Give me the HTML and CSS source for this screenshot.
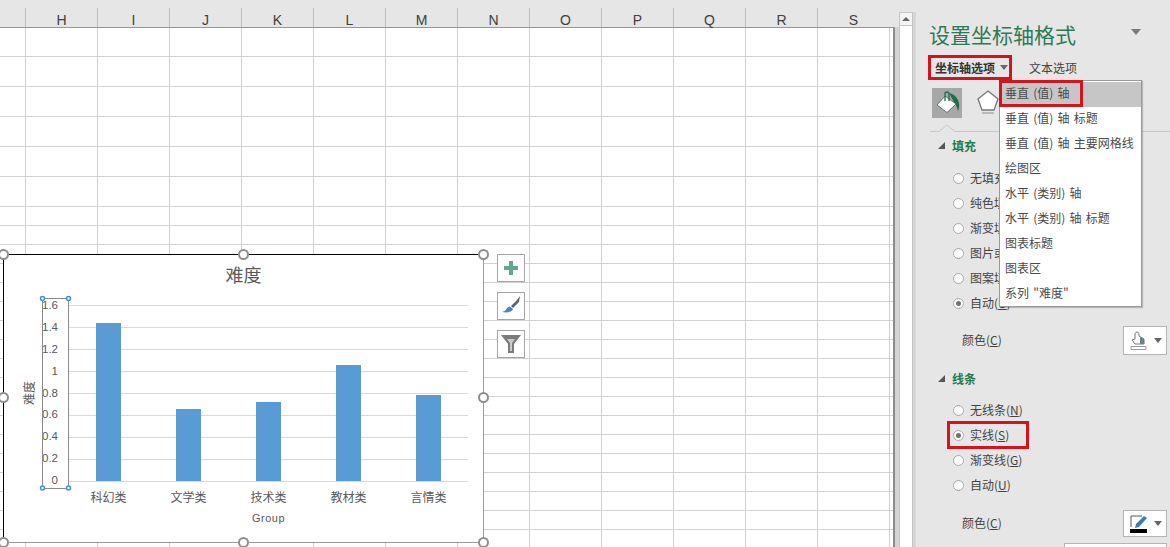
FILE: index.html
```html
<!DOCTYPE html>
<html lang="zh">
<head>
<meta charset="utf-8">
<title>设置坐标轴格式</title>
<link rel="stylesheet" href="styles.css">
</head>
<body>
<div class="app">
  <section class="sheet">
    <div class="col-header">
      <span class="corner"></span>
      <span class="col">H</span><span class="col">I</span><span class="col">J</span><span class="col">K</span><span class="col">L</span><span class="col">M</span><span class="col">N</span><span class="col">O</span><span class="col">P</span><span class="col">Q</span><span class="col">R</span><span class="col">S</span>
    </div>
    <div class="grid">
      <div class="row tall"></div><div class="row tall"></div><div class="row tall"></div><div class="row tall"></div><div class="row tall"></div><div class="row tall"></div>
      <div class="row"></div><div class="row"></div><div class="row"></div><div class="row"></div><div class="row"></div><div class="row"></div><div class="row"></div><div class="row"></div><div class="row"></div><div class="row"></div><div class="row"></div><div class="row"></div><div class="row"></div><div class="row"></div><div class="row"></div><div class="row"></div><div class="row"></div><div class="row"></div>
    </div>

    <div class="chart">
      <svg class="chart-svg" width="480" height="288" viewBox="4 255 480 288">
        <g class="gridlines">
          <line x1="69" x2="468" y1="305.5" y2="305.5"/><line x1="69" x2="468" y1="327.5" y2="327.5"/><line x1="69" x2="468" y1="349.5" y2="349.5"/><line x1="69" x2="468" y1="371.5" y2="371.5"/><line x1="69" x2="468" y1="393.5" y2="393.5"/><line x1="69" x2="468" y1="415.5" y2="415.5"/><line x1="69" x2="468" y1="437.5" y2="437.5"/><line x1="69" x2="468" y1="459.5" y2="459.5"/><line x1="69" x2="468" y1="481.5" y2="481.5"/>
        </g>
        <g class="bars">
          <rect x="96" y="323" width="25" height="158"/><rect x="176" y="409" width="25" height="72"/><rect x="256" y="402" width="25" height="79"/><rect x="336" y="365" width="25" height="116"/><rect x="416" y="395" width="25" height="86"/>
        </g>
        <text class="c-title" x="243.500" y="282">难度</text>
        <g class="c-ticks">
          <text x="58" y="309">1.6</text><text x="58" y="331">1.4</text><text x="58" y="353">1.2</text><text x="58" y="375">1</text><text x="58" y="397">0.8</text><text x="58" y="418">0.6</text><text x="58" y="440">0.4</text><text x="58" y="462">0.2</text><text x="58" y="484">0</text>
        </g>
        <g class="c-cats">
          <text x="108.500" y="502">科幻类</text><text x="188.500" y="502">文学类</text><text x="268.500" y="502">技术类</text><text x="348.500" y="502">教材类</text><text x="428.500" y="502">言情类</text>
        </g>
        <text class="c-group" x="268.500" y="522">Group</text>
        <text class="c-axis" transform="translate(34 393) rotate(-90)">难度</text>
        <rect class="axis-box" x="42.500" y="298.500" width="26" height="190"/>
        <g class="axis-handles">
          <circle cx="42.500" cy="298.500" r="2"/><circle cx="68.500" cy="298.500" r="2"/><circle cx="42.500" cy="488" r="2"/><circle cx="68.500" cy="488" r="2"/>
        </g>
      </svg>
      <span class="handle h-tl"></span><span class="handle h-tc"></span><span class="handle h-tr"></span>
      <span class="handle h-ml"></span><span class="handle h-mr"></span>
      <span class="handle h-bl"></span><span class="handle h-bc"></span><span class="handle h-br"></span>
    </div>

    <div class="chart-tools">
      <span class="tool"><svg width="16" height="16" viewBox="0 0 16 16"><path fill="#5fa88c" d="M6 1h4v5h5v4h-5v5H6v-5H1V6h5z"/></svg></span>
      <span class="tool"><svg width="22" height="22" viewBox="0 0 22 22"><path fill="#5b6470" d="M20 1l-1 6-6 6-2-2 6-6z"/><path fill="#4f86b5" d="M10 11.500l3 2.500c-1 3-5 4-11 3 3-1 4-2 5-4 1-1 2-1.500 3-1.500z"/></svg></span>
      <span class="tool"><svg width="22" height="22" viewBox="0 0 22 22"><path fill="#7b7b7b" d="M1 2h20l-7 9v9h-6v-9z"/><path fill="#fff" d="M7 6h8l-3 4v8h-2v-8z" opacity=".6"/></svg></span>
    </div>
  </section>

  <div class="gutter"></div>
  <div class="scrollbar"><span class="scroll-up"></span></div>
  <div class="divider"></div>

  <aside class="panel">
    <header class="panel-head">
      <h1 class="panel-title">设置坐标轴格式</h1>
      <span class="caret big"></span>
    </header>
    <div class="tabs">
      <div class="tab active">坐标轴选项<span class="caret tab-caret"></span></div>
      <div class="tab">文本选项</div>
    </div>
    <div class="icon-row">
      <span class="icon-tile">
        <svg width="30" height="30" viewBox="0 0 30 30"><path d="M17 5c5 1 9 5 10 10 .5 3 0 5-1 8-1-3-1-5-3-7z" fill="#1f6b4a"/><path d="M13 8l11 8-9 8.500L5 17z" fill="#fff" stroke="#2d6b50" stroke-width=".8"/><path d="M13 13V6a2 2 0 0 1 4 0v7" fill="none" stroke="#1f6b4a" stroke-width="1.300"/></svg>
      </span>
      <span class="icon-pent">
        <svg width="24" height="28" viewBox="0 0 24 28"><path d="M12 2l10 8-4 11H6L2 10z" fill="#fff" stroke="#777" stroke-width="1.300"/><path d="M6 24h12" stroke="#aaa" stroke-width="1.500"/></svg>
      </span>
    </div>
    <svg class="tab-rule" width="254" height="9" viewBox="0 0 254 9"><path d="M14 7.500H23L31 1l8 6.500H254" fill="none" stroke="#c8c8c8"/></svg>

    <div class="section first"><span class="tri"></span>填充</div>
    <div class="options opt-fill">
      <label class="opt"><span class="radio"></span>无填充(<u>N</u>)</label>
      <label class="opt"><span class="radio"></span>纯色填充(<u>S</u>)</label>
      <label class="opt"><span class="radio"></span>渐变填充(<u>G</u>)</label>
      <label class="opt"><span class="radio"></span>图片或纹理填充(<u>P</u>)</label>
      <label class="opt"><span class="radio"></span>图案填充(<u>A</u>)</label>
      <label class="opt"><span class="radio on"></span>自动(<u>U</u>)</label>
    </div>
    <div class="color-row fill-color">
      <span class="color-label">颜色(<u>C</u>)</span>
      <span class="color-btn">
        <svg width="20" height="20" viewBox="0 0 20 20"><path d="M8 1c2 0 2 2 2 4l5 3v5H6L3 9l3-1V3c0-1 1-2 2-2z" fill="#fff" stroke="#777"/><path d="M11 6l4 2v5h-4z" fill="#6a7f8c"/><path d="M2 15.500h15v3H2z" fill="#fff" stroke="#999"/></svg>
        <span class="caret"></span>
      </span>
    </div>

    <div class="section second"><span class="tri"></span>线条</div>
    <div class="options opt-line">
      <label class="opt"><span class="radio"></span>无线条(<u>N</u>)</label>
      <label class="opt marked"><span class="radio on"></span>实线(<u>S</u>)</label>
      <label class="opt"><span class="radio"></span>渐变线(<u>G</u>)</label>
      <label class="opt"><span class="radio"></span>自动(<u>U</u>)</label>
    </div>
    <div class="color-row line-color">
      <span class="color-label">颜色(<u>C</u>)</span>
      <span class="color-btn">
        <svg width="20" height="20" viewBox="0 0 20 20"><path d="M13 2H2v11" fill="none" stroke="#555"/><path d="M15 2l3 2-8 9-4 1 1-4z" fill="#3d7cb0"/><path d="M1 15h17v4H1z" fill="#000"/></svg>
        <span class="caret"></span>
      </span>
    </div>
    <div class="value-box"></div>

    <ul class="menu">
      <li class="sel">垂直 (值) 轴</li>
      <li>垂直 (值) 轴 标题</li>
      <li>垂直 (值) 轴 主要网格线</li>
      <li>绘图区</li>
      <li>水平 (类别) 轴</li>
      <li>水平 (类别) 轴 标题</li>
      <li>图表标题</li>
      <li>图表区</li>
      <li>系列 "难度"</li>
    </ul>
  </aside>
</div>
</body>
</html>
```
FILE: styles.css
```css
*, *::before, *::after { box-sizing: border-box; }
html, body { margin: 0; height: 100%; overflow: hidden; background: #e6e6e6; }
body { font-family: "Noto Sans CJK SC", "Liberation Sans", sans-serif; font-size: 12px; color: #444; }
.app { display: flex; width: 1170px; height: 547px; }

/* sheet */
.sheet { position: relative; width: 895px; height: 547px; flex: none; overflow: hidden; }
.col-header { display: flex; height: 28px; padding-top: 8px; background: #e6e6e6; border-bottom: 1px solid #969696; }
.corner { width: 25px; flex: none; }
.col { width: 72px; flex: none; border-left: 1px solid #bcbcbc; text-align: center; font: 14px/24px "Liberation Sans", sans-serif; color: #404040; }
.grid {
  position: relative;
  height: 519px;
  background-color: #fff;
  background-image: repeating-linear-gradient(to right, #d0d0d0 0, #d0d0d0 1px, transparent 1px, transparent 72px);
  background-position: 25px 0;
  border-right: 2px solid #8c8c8c;
}
.row { height: 19px; border-bottom: 1px solid #d0d0d0; }
.row.tall { height: 30px; }
.row.tall:first-child { height: 29px; }

/* chart */
.chart {
  position: absolute; left: 4px; top: 255px; width: 480px; height: 288px;
  background: #fff;
  border-right: 1px solid #9a9a9a; border-bottom: 1px solid #9a9a9a;
  box-shadow: -1px 0 0 #000, 0 -1px 0 #000;
}
.chart-svg { display: block; }
.chart-svg text { font-family: "Noto Sans CJK SC", sans-serif; fill: #595959; }
.gridlines line { stroke: #d9d9d9; stroke-width: 1; }
.bars rect { fill: #5b9bd5; }
.c-title { font-size: 18px; text-anchor: middle; }
.chart-svg .c-ticks text { font-family: "Liberation Sans", sans-serif; font-size: 11.500px; text-anchor: end; }
.c-cats text { font-size: 12px; text-anchor: middle; }
.chart-svg .c-group { font-family: "Liberation Sans", sans-serif; font-size: 11px; text-anchor: middle; letter-spacing: .5px; }
.c-axis { font-size: 12px; text-anchor: middle; }
.axis-box { fill: none; stroke: #8a8a8a; stroke-width: 1; }
.axis-handles circle { fill: #fff; stroke: #3f8fc9; stroke-width: 1.500; }
.handle { position: absolute; width: 11px; height: 11px; border-radius: 50%; background: #fff; border: 2px solid #8e8e8e; }
.h-tl { left: -6px; top: -6px; }
.h-tc { left: 234px; top: -6px; }
.h-tr { left: 474px; top: -6px; }
.h-ml { left: -6px; top: 137px; }
.h-mr { left: 474px; top: 137px; }
.h-bl { left: -6px; top: 282px; }
.h-bc { left: 234px; top: 282px; }
.h-br { left: 474px; top: 282px; }
.chart-tools { position: absolute; left: 497px; top: 254px; display: flex; flex-direction: column; gap: 10px; }
.tool { display: flex; align-items: center; justify-content: center; width: 28px; height: 28px; background: #fff; border: 1px solid #a6a6a6; }

/* scroll */
.gutter { width: 4px; flex: none; margin-top: 27px; background: #d4d4d4; }
.scrollbar { width: 14px; flex: none; margin-top: 12px; background: #fff; border-left: 1px solid #c4c4c4; border-right: 1px solid #c4c4c4; }
.scroll-up { display: flex; align-items: center; justify-content: center; height: 14px; background: #f4f4f4; border: 1px solid #c4c4c4; border-width: 1px 0; }
.scroll-up::before { content: ""; border: 4px solid transparent; border-top: 0; border-bottom: 4px solid #666; }
.divider { width: 3px; flex: none; margin-top: 12px; background: #d6d6d6; }

/* panel */
.panel { position: relative; width: 254px; height: 547px; flex: none; overflow: hidden; background: #e6e6e6; }
.panel-head { display: flex; align-items: center; justify-content: space-between; height: 32px; margin-top: 18px; padding: 0 29px 0 13px; }
.panel-title { margin: 0; font-size: 21px; font-weight: 400; line-height: 32px; color: #2f7a56; }
.caret { display: inline-block; width: 8px; height: 5px; border-style: solid; border-color: #666 transparent transparent; border-width: 5px 4px 0; }
.caret.big { width: 10px; height: 6px; border-width: 6px 5px 0; border-top-color: #7a7a7a; margin-top: -4px; }
.tabs { display: flex; align-items: center; height: 25px; margin: 5px 0 0 12px; gap: 17px; }
.tab { font-size: 12px; line-height: 19px; }
.tab.active { width: 84px; height: 25px; padding-left: 4px; border: 3px solid #d3141c; font-weight: 700; color: #333; display: flex; align-items: center; white-space: nowrap; }
.tab-caret { margin-left: 5px; }
.icon-row { display: flex; align-items: center; height: 30px; margin: 8px 0 0 16px; gap: 14px; }
.icon-tile { width: 30px; height: 30px; background: #a7a7a7; display: block; }
.icon-tile svg, .icon-pent svg { display: block; }
.tab-rule { display: block; margin-top: 6px; }
.section { position: relative; display: flex; align-items: center; height: 20px; padding-left: 36px; font-weight: 700; color: #1f7a4d; }
.section.first { margin-top: 2px; }
.section.second { margin-top: 13px; }
.tri { position: absolute; left: 22px; top: 7px; width: 7px; height: 7px; border-style: solid; border-color: transparent transparent #555; border-width: 0 0 7px 7px; }
.options { display: flex; flex-direction: column; }
.opt-fill { margin-top: 11px; }
.opt-line { margin-top: 10px; }
.opt { position: relative; display: flex; align-items: center; height: 25px; padding: 0 0 2px 37px; white-space: nowrap; color: #444; }
.radio { width: 11px; height: 11px; margin: 2px 6px 0 0; border-radius: 50%; border: 1px solid #a8a8a8; background: #fff; display: flex; align-items: center; justify-content: center; flex: none; }
.radio.on::before { content: ""; width: 5px; height: 5px; border-radius: 50%; background: #707070; }
.marked::after { content: ""; position: absolute; left: 31px; top: -2px; width: 82px; height: 28px; border: 3px solid #d3141c; }
.color-row { display: flex; align-items: center; justify-content: space-between; padding: 0 3px 0 46px; }
.color-label { padding-bottom: 2px; }
.fill-color { height: 29px; margin-top: 10px; }
.line-color { height: 27px; margin-top: 12px; }
.color-btn { display: flex; align-items: center; justify-content: center; gap: 5px; width: 44px; height: 100%; background: #fff; border: 1px solid #b4b4b4; }
.color-btn svg { display: block; }
.value-box { width: 103px; height: 20px; margin: 6px 0 0 148px; background: #fff; border: 1px solid #b4b4b4; }

/* dropdown */
.menu { position: absolute; left: 83px; top: 80px; width: 143px; height: 227px; margin: 0; padding: 1px 0 0; list-style: none; background: #fff; border: 1px solid #9a9a9a; box-shadow: 1px 1px 1px rgba(0,0,0,.2); }
.menu li { position: relative; height: 25px; padding-left: 5px; line-height: 22px; word-spacing: 1.500px; white-space: nowrap; color: #4a4a4a; }
.menu li.sel { background: #c6c6c6; }
.menu li.sel::after { content: ""; position: absolute; left: -1px; top: -2px; width: 84px; height: 27px; border: 3px solid #d3141c; }
```
